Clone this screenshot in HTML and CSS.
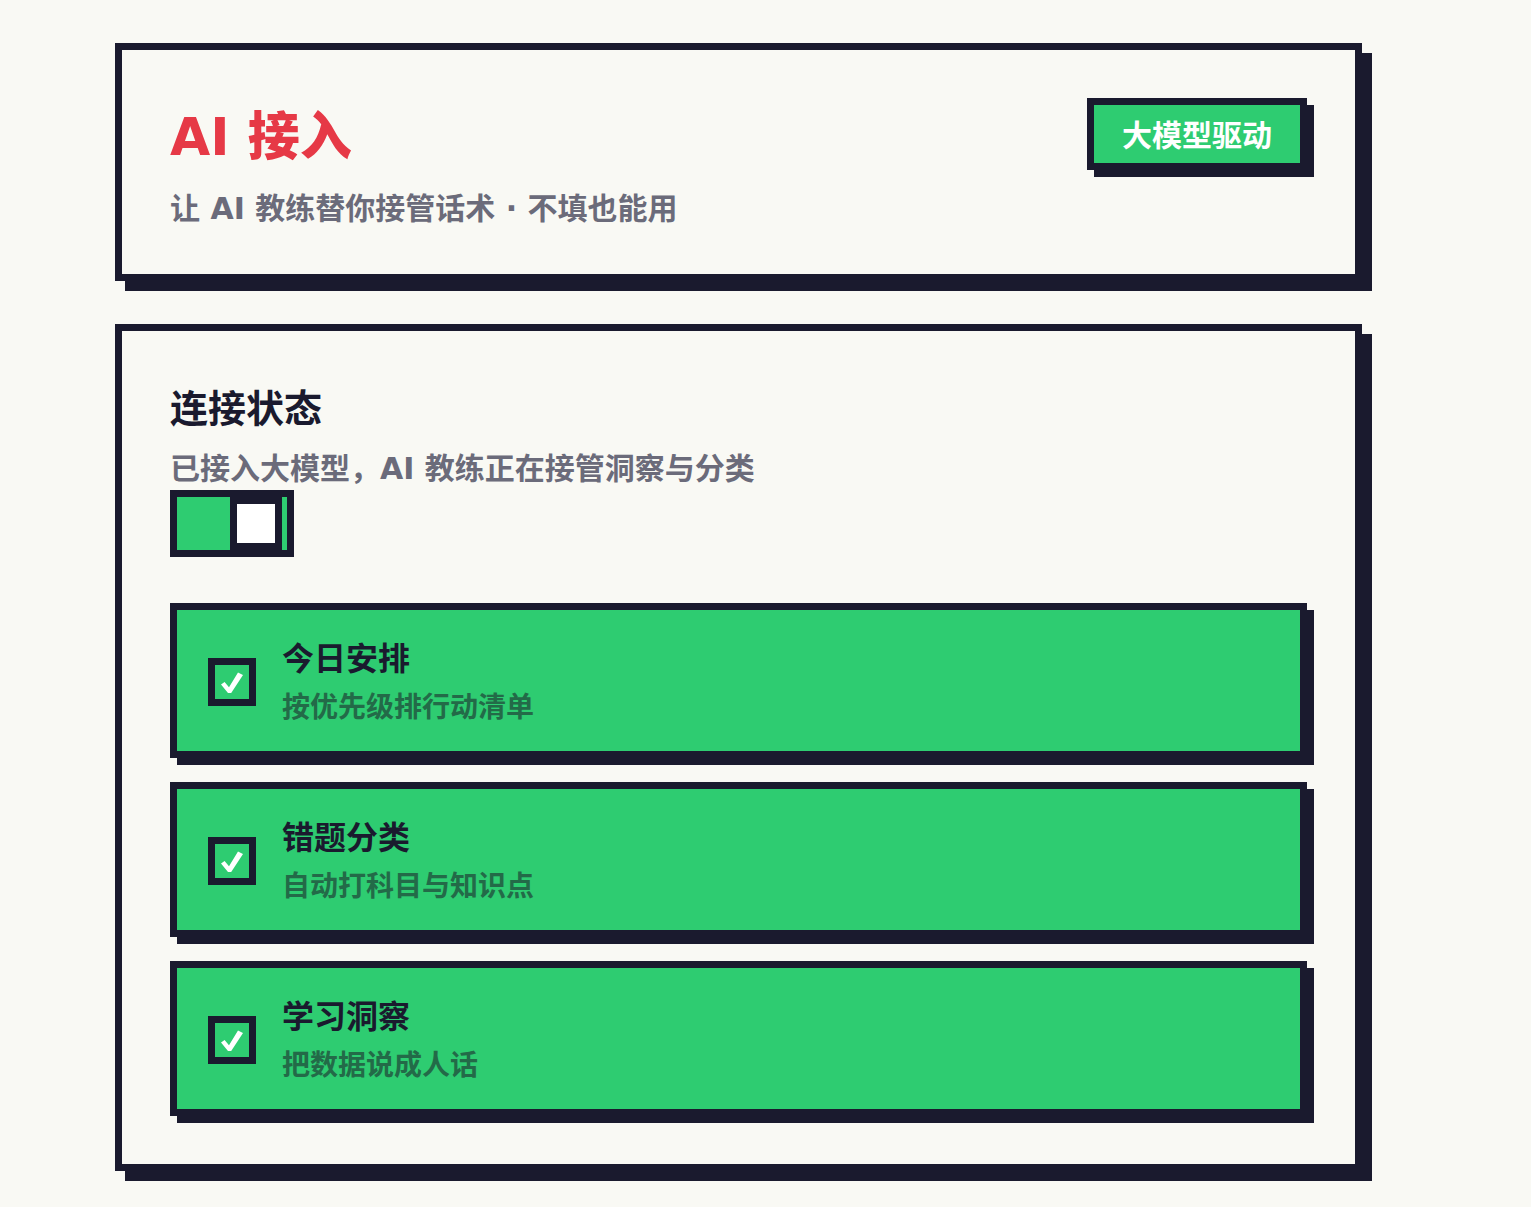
FILE: index.html
```html
<!DOCTYPE html>
<html lang="zh-CN">
<head>
<meta charset="utf-8">
<title>AI 接入</title>
<link rel="stylesheet" href="styles.css">
</head>
<body>
<main class="page">
  <section class="card card-header">
    <div class="header-text">
      <h1 class="title">AI 接入</h1>
      <p class="subtitle subtitle-header">让 AI 教练替你接管话术 · 不填也能用</p>
    </div>
    <span class="badge">大模型驱动</span>
  </section>

  <section class="card card-status">
    <h2 class="section-title">连接状态</h2>
    <p class="subtitle subtitle-status">已接入大模型，AI 教练正在接管洞察与分类</p>
    <div class="toggle" role="switch" aria-checked="true"><span class="knob"></span></div>

    <ul class="features">
      <li class="feature">
        <span class="check"><svg class="check-icon" viewBox="0 0 22 21" width="22" height="21" aria-hidden="true"><polygon points="0,12.5 3.6,10 8,15.2 17,0.5 22,3 10.2,21 7,21"/></svg></span>
        <div class="feature-text">
          <div class="feature-title">今日安排</div>
          <div class="feature-desc">按优先级排行动清单</div>
        </div>
      </li>
      <li class="feature">
        <span class="check"><svg class="check-icon" viewBox="0 0 22 21" width="22" height="21" aria-hidden="true"><polygon points="0,12.5 3.6,10 8,15.2 17,0.5 22,3 10.2,21 7,21"/></svg></span>
        <div class="feature-text">
          <div class="feature-title">错题分类</div>
          <div class="feature-desc">自动打科目与知识点</div>
        </div>
      </li>
      <li class="feature">
        <span class="check"><svg class="check-icon" viewBox="0 0 22 21" width="22" height="21" aria-hidden="true"><polygon points="0,12.5 3.6,10 8,15.2 17,0.5 22,3 10.2,21 7,21"/></svg></span>
        <div class="feature-text">
          <div class="feature-title">学习洞察</div>
          <div class="feature-desc">把数据说成人话</div>
        </div>
      </li>
    </ul>
  </section>
</main>
</body>
</html>
```

FILE: styles.css
```css
* { box-sizing: border-box; }

html, body {
  margin: 0;
  padding: 0;
  background: #f9f9f4;
}

body {
  font-family: "DejaVu Sans", "Noto Sans CJK SC", sans-serif;
  color: #1a1a2e;
}

.page {
  padding: 43px 0 40px 115px;
}

.card {
  width: 1247px;
  border: 7px solid #1a1a2e;
  background: #f9f9f4;
  box-shadow: 10px 10px 0 #1a1a2e;
  padding: 48px;
}

.card-header {
  display: flex;
  justify-content: space-between;
  align-items: flex-start;
  padding-bottom: 44px;
}

.card-status {
  margin-top: 43px;
}

.title {
  margin: 0;
  font-size: 52px;
  line-height: 78px;
  font-weight: 900;
  color: #e63946;
}

.subtitle {
  margin: 0;
  font-size: 30px;
  line-height: 42px;
  font-weight: 700;
  color: #6b6b7a;
}

.subtitle-header { margin-top: 12px; }
.subtitle-status { margin-top: 9px; }

.badge {
  display: block;
  border: 7px solid #1a1a2e;
  background: #2ecc71;
  color: #ffffff;
  font-size: 30px;
  line-height: 44px;
  font-weight: 700;
  padding: 9px 28px 5px;
  box-shadow: 7px 7px 0 #1a1a2e;
  white-space: nowrap;
}

.section-title {
  margin: 0;
  font-size: 38px;
  line-height: 60px;
  font-weight: 700;
  color: #1a1a2e;
}

.toggle {
  display: flex;
  justify-content: flex-end;
  width: 124px;
  height: 67px;
  border: 7px solid #1a1a2e;
  background: #2ecc71;
  padding-right: 5px;
}

.knob {
  display: block;
  width: 52px;
  height: 53px;
  border: 7px solid #1a1a2e;
  background: #ffffff;
}

.features {
  list-style: none;
  margin: 46px 0 0;
  padding: 0;
  display: flex;
  flex-direction: column;
  gap: 24px;
}

.feature {
  display: flex;
  align-items: center;
  gap: 26px;
  border: 7px solid #1a1a2e;
  background: #2ecc71;
  box-shadow: 7px 7px 0 #1a1a2e;
  padding: 26px 31px 23px;
}

.check {
  flex: none;
  width: 48px;
  height: 48px;
  border: 7px solid #1a1a2e;
  background: #2ecc71;
  display: flex;
  align-items: center;
  justify-content: center;
}

.check-icon {
  display: block;
  fill: #ffffff;
}

.feature-title {
  font-size: 32px;
  line-height: 46px;
  font-weight: 700;
  color: #1a1a2e;
}

.feature-desc {
  margin-top: 6px;
  font-size: 28px;
  line-height: 40px;
  font-weight: 700;
  color: #236a48;
}
```
